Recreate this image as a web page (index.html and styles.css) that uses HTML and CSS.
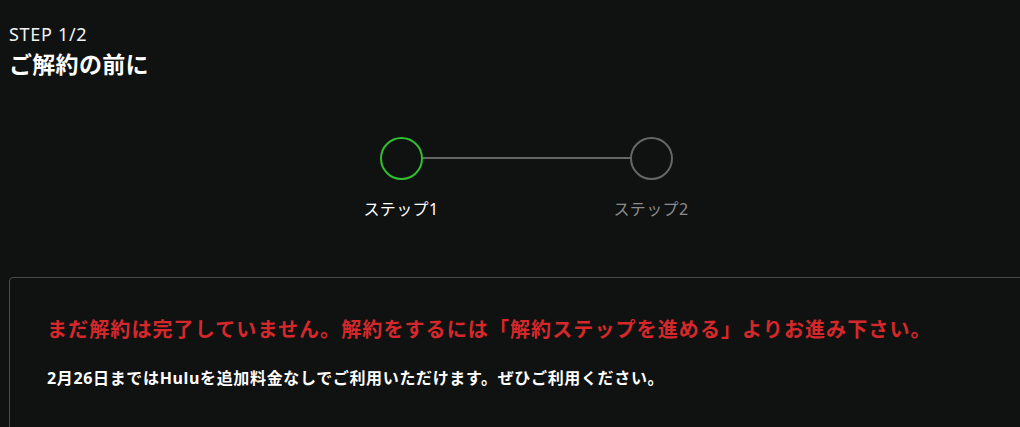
FILE: index.html
```html
<!DOCTYPE html>
<html lang="ja">
<head>
  <meta charset="UTF-8">
  <meta name="viewport" content="width=device-width, initial-scale=1.0">
  <title>解約 - STEP 1/2</title>
  <link rel="stylesheet" href="styles.css">
</head>
<body>
  <div class="page">
    <header class="page-head">
      <p class="step-count">STEP 1/2</p>
      <h1 class="page-title">ご解約の前に</h1>
    </header>

    <div class="stepper">
      <div class="step step-current">
        <div class="step-circle"></div>
        <div class="step-label">ステップ1</div>
      </div>
      <div class="step-line"></div>
      <div class="step">
        <div class="step-circle"></div>
        <div class="step-label">ステップ2</div>
      </div>
    </div>

    <div class="notice">
      <p class="notice-warn">まだ解約は完了していません。解約をするには「解約ステップを進める」よりお進み下さい。</p>
      <p class="notice-info">2月26日まではHuluを追加料金なしでご利用いただけます。ぜひご利用ください。</p>
    </div>
  </div>
</body>
</html>
```

FILE: styles.css
```css
* {
  margin: 0;
  padding: 0;
  box-sizing: border-box;
}

html,
body {
  height: 100%;
}

body {
  font-family: "Noto Sans", "Noto Sans CJK JP", sans-serif;
  background-color: #101212;
  color: #fff;
  overflow: hidden;
}

.page {
  width: 1034px;
  margin-left: 9px;
  padding-top: 20px;
}

.step-count {
  font-size: 18px;
  line-height: 28px;
  letter-spacing: 0.7px;
  color: #f2f2f2;
}

.page-title {
  font-size: 23px;
  line-height: 32px;
  letter-spacing: 0.3px;
  font-weight: 700;
}

.stepper {
  display: flex;
  justify-content: center;
  margin-top: 57px;
}

.step {
  width: 43px;
  display: flex;
  flex-direction: column;
  align-items: center;
}

.step-circle {
  width: 43px;
  height: 43px;
  border: 2px solid #666;
  border-radius: 50%;
}

.step-current .step-circle {
  border-color: #2fbf2f;
}

.step-label {
  width: 100px;
  margin: 17px -28px 0;
  text-align: center;
  white-space: nowrap;
  font-size: 16px;
  line-height: 24px;
  letter-spacing: 0.4px;
  color: #8c8c8c;
}

.step-current .step-label {
  color: #fff;
}

.step-line {
  width: 207px;
  height: 2px;
  margin-top: 20px;
  background-color: #666;
}

.notice {
  margin-top: 56px;
  padding: 37px 37px 40px;
  border: 1px solid #4a4a4a;
  border-radius: 4px;
  min-height: 160px;
}

.notice-warn {
  font-size: 20px;
  line-height: 30px;
  letter-spacing: 1.1px;
  font-weight: 700;
  color: #d6282b;
}

.notice-info {
  margin-top: 21px;
  font-size: 16px;
  line-height: 24px;
  letter-spacing: 0.65px;
  font-weight: 700;
}
```
